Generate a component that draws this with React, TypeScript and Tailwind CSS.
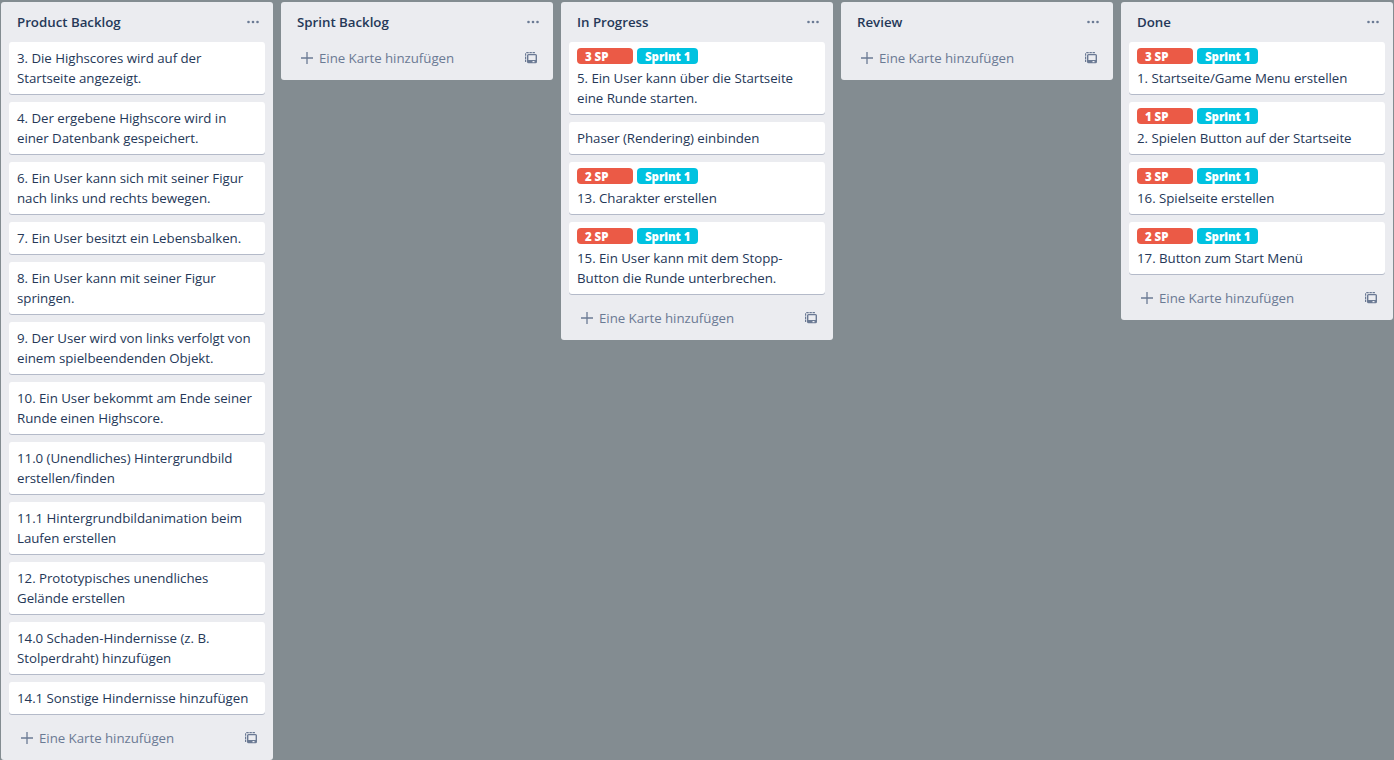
type Card = { lines: string[]; points?: string };
type List = { title: string; cards: Card[] };

const lists: List[] = [
  {
    title: 'Product Backlog',
    cards: [
      { lines: ['3. Die Highscores wird auf der', 'Startseite angezeigt.'] },
      { lines: ['4. Der ergebene Highscore wird in', 'einer Datenbank gespeichert.'] },
      { lines: ['6. Ein User kann sich mit seiner Figur', 'nach links und rechts bewegen.'] },
      { lines: ['7. Ein User besitzt ein Lebensbalken.'] },
      { lines: ['8. Ein User kann mit seiner Figur', 'springen.'] },
      { lines: ['9. Der User wird von links verfolgt von', 'einem spielbeendenden Objekt.'] },
      { lines: ['10. Ein User bekommt am Ende seiner', 'Runde einen Highscore.'] },
      { lines: ['11.0 (Unendliches) Hintergrundbild', 'erstellen/finden'] },
      { lines: ['11.1 Hintergrundbildanimation beim', 'Laufen erstellen'] },
      { lines: ['12. Prototypisches unendliches', 'Gelände erstellen'] },
      { lines: ['14.0 Schaden-Hindernisse (z. B.', 'Stolperdraht) hinzufügen'] },
      { lines: ['14.1 Sonstige Hindernisse hinzufügen'] },
    ],
  },
  { title: 'Sprint Backlog', cards: [] },
  {
    title: 'In Progress',
    cards: [
      { points: '3 SP', lines: ['5. Ein User kann über die Startseite', 'eine Runde starten.'] },
      { lines: ['Phaser (Rendering) einbinden'] },
      { points: '2 SP', lines: ['13. Charakter erstellen'] },
      { points: '2 SP', lines: ['15. Ein User kann mit dem Stopp-', 'Button die Runde unterbrechen.'] },
    ],
  },
  { title: 'Review', cards: [] },
  {
    title: 'Done',
    cards: [
      { points: '3 SP', lines: ['1. Startseite/Game Menu erstellen'] },
      { points: '1 SP', lines: ['2. Spielen Button auf der Startseite'] },
      { points: '3 SP', lines: ['16. Spielseite erstellen'] },
      { points: '2 SP', lines: ['17. Button zum Start Menü'] },
    ],
  },
];

function TemplateIcon() {
  return (
    <svg width="12" height="12" viewBox="0 0 12 12" className="text-[#6b7a94]">
      <path
        d="M0.6 10V2A1.400 1.400 0 0 1 2 0.600H10.500"
        fill="none"
        stroke="currentColor"
        strokeWidth="1.2"
        strokeDasharray="2.4 0.7"
      />
      <path
        fill="currentColor"
        fillRule="evenodd"
        d="M3.500 2h7A1.500 1.500 0 0 1 12 3.500v6.300a1.500 1.500 0 0 1-1.500 1.500h-7A1.500 1.500 0 0 1 2 9.800V3.500A1.500 1.500 0 0 1 3.500 2zM3.400 3.300v4.700h7.200V3.300zM7.500 9v1.200h2V9z"
      />
    </svg>
  );
}

function CardView({ card }: { card: Card }) {
  return (
    <div className="mb-2 rounded-[3px] bg-white px-2 py-1.5 shadow-[0_1px_0_#b4bac9]">
      {card.points && (
        <div className="flex h-5 gap-1 text-[11.5px] leading-[17.5px] font-extrabold tracking-[-0.07px] text-white">
          <span className="h-4 w-14 rounded bg-[#eb5a46] px-2">{card.points}</span>
          <span className="h-4 w-[61px] rounded bg-[#00c2e0] px-2 whitespace-nowrap">Sprint 1</span>
        </div>
      )}
      {card.lines.map((line) => (
        <p key={line} className="whitespace-nowrap">{line}</p>
      ))}
    </div>
  );
}

function ListView({ list }: { list: List }) {
  return (
    <section className="w-[272px] shrink-0 rounded-[3px] bg-[#ebecf0] px-2 pb-1.5">
      <header className="flex h-10 items-center justify-between pr-1.5 pl-2">
        <h2 className="text-[13.3px] font-semibold tracking-[-0.02px]">{list.title}</h2>
        <svg width="12" height="4" viewBox="0 0 12 4" fill="#6b7a94">
          <circle cx="1.5" cy="2" r="1.3" />
          <circle cx="6" cy="2" r="1.3" />
          <circle cx="10.5" cy="2" r="1.3" />
        </svg>
      </header>
      {list.cards.map((card) => (
        <CardView key={card.lines[0]} card={card} />
      ))}
      <div className="flex h-8 items-center pr-2 pl-3 text-[#6b7a94]">
        <svg width="12" height="12" viewBox="0 0 12 12" stroke="#6b7a94" strokeWidth="1.3">
          <path d="M6 0v12M0 6h12" />
        </svg>
        <span className="ml-1.5 flex-1">Eine Karte hinzufügen</span>
        <TemplateIcon />
      </div>
    </section>
  );
}

export default function App() {
  return (
    <main className="flex h-[760px] w-[1394px] items-start gap-2 overflow-hidden bg-[#838c91] pt-0.5 pl-px font-['Open_Sans',sans-serif] text-[13.3px] leading-5 tracking-[-0.04px] text-[#253858]">
      {lists.map((list) => (
        <ListView key={list.title} list={list} />
      ))}
    </main>
  );
}
